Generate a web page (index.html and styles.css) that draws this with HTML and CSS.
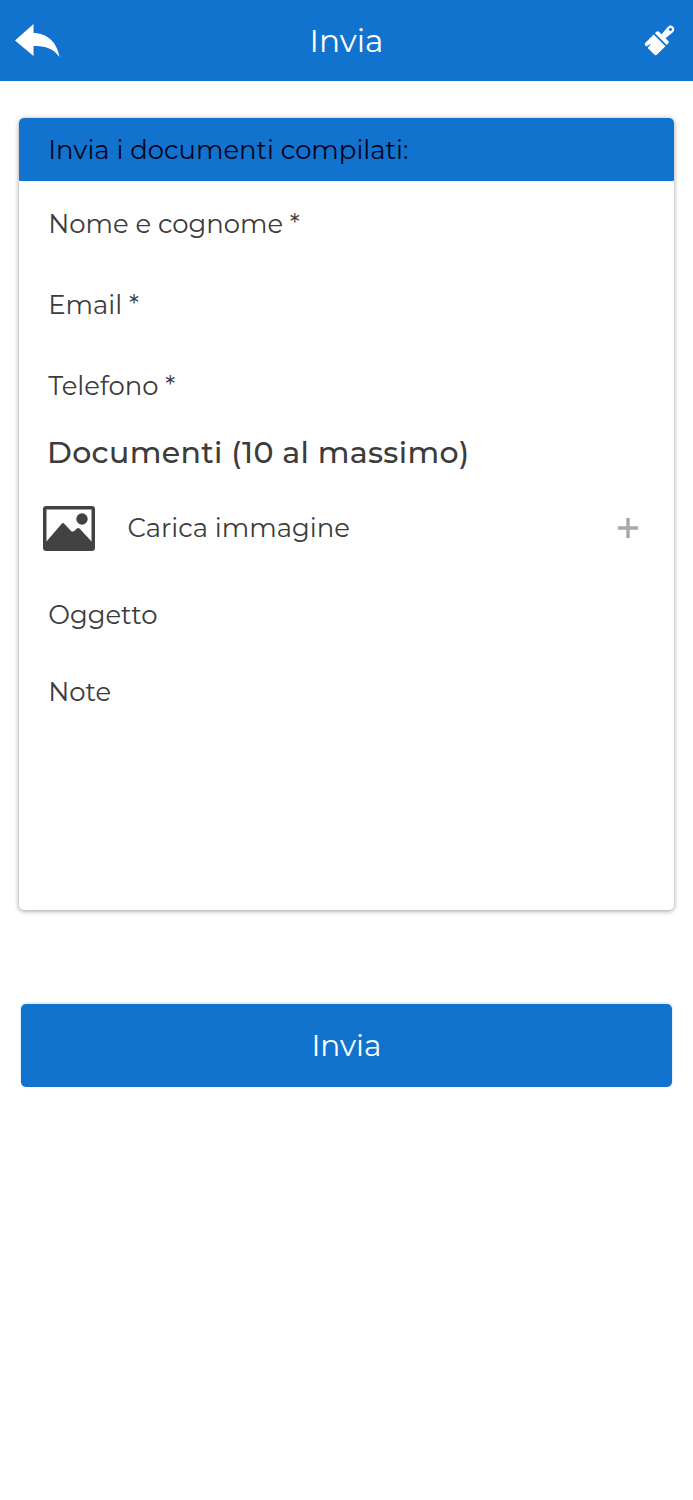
FILE: index.html
```html
<!DOCTYPE html>
<html lang="it">
<head>
    <title>Invia</title>
    <meta charset="UTF-8">
    <meta name="viewport" content="width=device-width, initial-scale=1.0">
    <link rel="stylesheet" href="styles.css">
</head>
<body>
    <header class="topbar">
        <svg class="icon-back" viewBox="0 0 46 34">
            <path d="M0 16.5 L18.5 0 V9 C32 9 42 18 44.5 33 C38 24 30 22 18.5 22 V32 Z" fill="#fff"/>
        </svg>
        <h1 class="title">Invia</h1>
        <svg class="icon-brush" viewBox="0 0 32 32">
            <g transform="translate(16 15.9) rotate(45)" fill="#fff">
                <path fill-rule="evenodd" d="M-8.3 -2.6 V-4.5 Q-8.3 -6.5 -6.3 -6.5 H-2.8 L-3.6 -16 Q-3.6 -20 0 -20 Q3.6 -20 3.6 -16 L2.8 -6.5 H6.3 Q8.3 -6.5 8.3 -4.5 V-2.6 Z M0 -17.7 A1.5 1.5 0 1 0 0 -14.7 A1.5 1.5 0 1 0 0 -17.7 Z"/>
                <path d="M-8.3 -0.8 H8.3 V11 Q8.3 13 6.3 13 H-3 L-3.8 7.5 L-5.2 13 H-6.3 Q-8.3 13 -8.3 11 Z"/>
            </g>
        </svg>
    </header>

    <form class="form">
        <section class="card">
            <h2 class="card-title">Invia i documenti compilati:</h2>
            <div class="field">Nome e cognome *</div>
            <div class="field">Email *</div>
            <div class="field">Telefono *</div>
            <h3 class="subtitle">Documenti (10 al massimo)</h3>
            <div class="upload">
                <svg class="icon-image" viewBox="0 0 52 45">
                    <rect x="1.75" y="1.75" width="48.5" height="41.5" rx="1.5" fill="none" stroke="#424242" stroke-width="3.5"/>
                    <circle cx="39" cy="13" r="5.7" fill="#424242"/>
                    <path d="M3 36 L18.5 18 Q20 16 21.5 18 L28 25 Q29.5 26 31 25 L34 22.5 Q35.5 21.5 37 23 L49 36 V43 H3 Z" fill="#424242"/>
                </svg>
                <span class="upload-label">Carica immagine</span>
                <svg class="icon-plus" viewBox="0 0 20 20">
                    <path d="M10 0 V20 M0 10 H20" stroke="#a8a8a8" stroke-width="3.4"/>
                </svg>
            </div>
            <div class="field subject">Oggetto</div>
            <div class="field notes">Note</div>
        </section>

        <button class="submit" type="button">Invia</button>
    </form>
</body>
</html>
```

FILE: styles.css
```css
* {
    box-sizing: border-box;
}
body {
    margin: 0;
    min-height: 1500px;
    background: #fff;
    color: #3c3c3c;
    font-family: Montserrat, Inter, sans-serif;
    font-size: 25.9px;
}
h1, h2, h3 {
    margin: 0;
    font-weight: 400;
}
.topbar {
    display: flex;
    align-items: center;
    height: 80.5px;
    padding: 1px 18px 0 15px;
    background: #1273ce;
}
.icon-back {
    width: 46px;
    height: 34px;
}
.title {
    flex: 1;
    margin-right: 11px;
    color: #fff;
    font-size: 31.2px;
    line-height: 38px;
    text-align: center;
}
.icon-brush {
    width: 32px;
    height: 32px;
}
.form {
    padding: 37.5px 18px 0 18.6px;
}
.card {
    width: 655.8px;
    height: 792px;
    border-radius: 5px;
    background: #fff;
    box-shadow: 0 1px 5px rgba(0, 0, 0, 0.4);
}
.card-title {
    display: flex;
    align-items: center;
    height: 63px;
    padding-left: 29.7px;
    border-radius: 5px 5px 1px 1px;
    background: #1273ce;
    color: #05051c;
    font-size: 25.9px;
}
.field {
    display: flex;
    align-items: center;
    height: 81px;
    padding-left: 29.7px;
}
.card-title + .field {
    margin-top: 2px;
}
.subtitle {
    height: 53px;
    padding-left: 28.5px;
    font-size: 30px;
    font-weight: 500;
    letter-spacing: 0.35px;
    line-height: 53px;
}
.upload {
    display: flex;
    align-items: center;
    height: 98px;
    padding: 0 36.6px 0 24px;
}
.icon-image {
    width: 52px;
    height: 45px;
}
.upload-label {
    flex: 1;
    padding-left: 33px;
}
.icon-plus {
    width: 20px;
    height: 20px;
}
.subject, .notes {
    height: 77px;
}
.subject {
    margin-top: -0.5px;
}
.submit {
    display: block;
    width: 651.8px;
    height: 83px;
    margin: 94px 0 0 2px;
    padding: 0 0 1px;
    border: none;
    border-radius: 5px;
    background: #1273ce;
    box-shadow: 0 -1px 0 1px #e3effa;
    color: #fff;
    font-family: inherit;
    font-size: 29.6px;
}
```
